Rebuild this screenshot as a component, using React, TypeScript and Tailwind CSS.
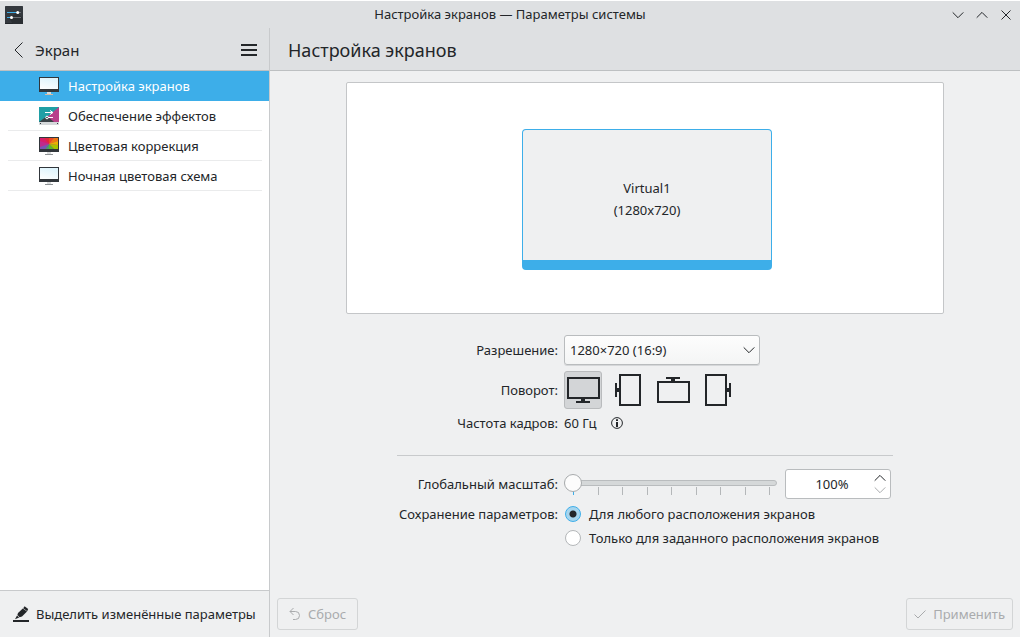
import { useState, type ReactNode } from "react";

type IconProps = { className?: string };

function Chevron({ className = "", up = false }: IconProps & { up?: boolean }) {
  return (
    <svg className={className} width="12" height="12" viewBox="0 0 12 12" fill="none" stroke="currentColor" aria-hidden="true">
      <path d={up ? "M0.7 8.7 6 3.4l5.3 5.3" : "M0.7 3.4 6 8.7l5.3-5.3"} />
    </svg>
  );
}

function AppIcon() {
  return (
    <svg width="18" height="18" viewBox="0 0 18 18" aria-hidden="true">
      <rect width="18" height="18" rx="0.5" fill="#34393e" />
      <path d="M0 17.5h18" stroke="#22262a" />
      <path d="M12 6.5l6 6V18H8l-4-6z" fill="#2a2e32" />
      <path d="M2 6.5h11" stroke="#3daee9" />
      <path d="M14 6.5h2" stroke="#6b7075" />
      <path d="M2 11.5h4" stroke="#3daee9" />
      <path d="M7 11.5h9" stroke="#6b7075" />
      <circle cx="12.7" cy="6.5" r="1.5" fill="#fff" />
      <circle cx="6.5" cy="11.5" r="1.5" fill="#fff" />
    </svg>
  );
}

function Monitor({ stand = "#b3b7ba", children }: { stand?: string; children: ReactNode }) {
  return (
    <svg width="20" height="20" viewBox="0 0 20 20" aria-hidden="true">
      <path d="M8 16h4v2H8z" fill="#d8dadb" />
      <path d="M6 18h8v1H6z" fill={stand} />
      <rect y="1" width="20" height="15" fill="#31363b" />
      {children}
    </svg>
  );
}

function DisplayIcon({ stand }: { stand?: string }) {
  return (
    <Monitor stand={stand}>
      <defs>
        <linearGradient id="sky" x1="0" y1="1" x2="0.4" y2="0">
          <stop offset="0" stopColor="#fff" />
          <stop offset="1" stopColor="#e0f5fd" />
        </linearGradient>
      </defs>
      <rect x="1" y="2" width="18" height="11" fill="url(#sky)" />
    </Monitor>
  );
}

function ColorIcon() {
  return (
    <Monitor stand="#8e9396">
      <rect x="1" y="2" width="18" height="11" fill="#c02a8c" />
      <path d="M10 8 1 5V2h4z" fill="#d81c6c" />
      <path d="M10 8 5 2h5z" fill="#e2263c" />
      <path d="M10 8V2h5z" fill="#ea4a22" />
      <path d="M10 8 15 2h4v3z" fill="#ef7a12" />
      <path d="M10 8l9-3v4z" fill="#e8b400" />
      <path d="M10 8l9 1v4h-4z" fill="#a8c400" />
      <path d="M10 8l5 5h-5z" fill="#5cb82a" />
      <path d="M10 8v5H6z" fill="#4a9a6c" />
      <path d="M10 8 6 13H1v-2z" fill="#7a54b4" />
    </Monitor>
  );
}

function EffectsIcon() {
  return (
    <svg width="20" height="20" viewBox="0 0 20 20" aria-hidden="true">
      <rect y="1" width="20" height="15" fill="#1f9fa5" />
      <path d="M20 1v15h-7L8 11z" fill="#b8408a" />
      <path d="M0 16l8-6 7 6z" fill="#3b4348" />
      <rect y="16" width="20" height="3" fill="#d5d8da" />
      <path d="M1 17.5h1M18 17.5h1" stroke="#31363b" />
      <path d="M6 6.5h8M11 4.5l3 2-3 2M14 11.5H9" stroke="#fff" fill="none" />
      <circle cx="8" cy="11.5" r="1.3" stroke="#fff" fill="none" />
    </svg>
  );
}

type Rotation = "normal" | "left" | "inverted" | "right";

function RotationIcon({ kind }: { kind: Rotation }) {
  return (
    <svg width="36" height="36" viewBox="0 0 36 36" fill="none" stroke="#232629" strokeWidth="2" aria-hidden="true">
      {kind === "normal" && (
        <>
          <path d="M3 6h31v20H3zM11 30h14" />
          <path d="M18 26v4" strokeWidth="4" />
        </>
      )}
      {kind === "left" && (
        <>
          <path d="M10 3h20v30H10zM6 11v14" />
          <path d="M6 18h4" strokeWidth="4" />
        </>
      )}
      {kind === "inverted" && (
        <>
          <path d="M3 10h31v20H3zM11 6h14" />
          <path d="M18 6v4" strokeWidth="4" />
        </>
      )}
      {kind === "right" && (
        <>
          <path d="M6 3h20v30H6zM30 11v14" />
          <path d="M26 18h4" strokeWidth="4" />
        </>
      )}
    </svg>
  );
}

const pages: { title: string; icon: ReactNode }[] = [
  { title: "Настройка экранов", icon: <DisplayIcon stand="#d9b9a0" /> },
  { title: "Обеспечение эффектов", icon: <EffectsIcon /> },
  { title: "Цветовая коррекция", icon: <ColorIcon /> },
  { title: "Ночная цветовая схема", icon: <DisplayIcon stand="#8e9396" /> },
];

const rotations: { kind: Rotation; label: string }[] = [
  { kind: "normal", label: "Без поворота" },
  { kind: "left", label: "90° по часовой стрелке" },
  { kind: "inverted", label: "Вверх ногами" },
  { kind: "right", label: "90° против часовой стрелки" },
];

const ticks = [100, 125, 150, 175, 200, 225, 250, 275, 300];

function TitleBar() {
  return (
    <header className="grid h-7 grid-cols-[1fr_auto_1fr] items-center border-t border-white bg-[#dee0e2] px-[5px]">
      <AppIcon />
      <div className="pb-[2px] text-[13px]">Настройка экранов — Параметры системы</div>
      <div className="flex justify-end gap-3 pr-[3px]">
        <button type="button" aria-label="Свернуть"><Chevron /></button>
        <button type="button" aria-label="Развернуть"><Chevron up /></button>
        <button type="button" aria-label="Закрыть">
          <svg width="12" height="12" viewBox="0 0 12 12" stroke="currentColor" aria-hidden="true">
            <path d="M1.5 1.5l9 9M10.5 1.5l-9 9" />
          </svg>
        </button>
      </div>
    </header>
  );
}

function Sidebar() {
  return (
    <aside className="flex w-[270px] shrink-0 flex-col border-r border-[#c8cacc]">
      <div className="flex h-[43px] items-center justify-between border-b border-[#bdc0c2] bg-[#dee0e2] px-3 pt-[2px]">
        <button type="button" className="flex items-center gap-[9px] text-[15px]">
          <svg width="14" height="16" viewBox="0 0 14 16" fill="none" stroke="currentColor" aria-hidden="true">
            <path d="M10.5 0.5 3 8l7.5 7.5" />
          </svg>
          Экран
        </button>
        <button type="button" aria-label="Меню">
          <svg width="16" height="12" viewBox="0 0 16 12" fill="currentColor" aria-hidden="true">
            <path d="M0 0h16v2H0zM0 5h16v2H0zM0 10h16v2H0z" />
          </svg>
        </button>
      </div>
      <nav className="flex-1 bg-white">
        {pages.map((page, i) => (
          <a
            key={page.title}
            href="#"
            aria-current={i === 0 ? "page" : undefined}
            className={
              i === 0
                ? "flex h-[30px] items-center gap-[9px] bg-[#3daee9] pl-[39px] text-white"
                : "mr-[7px] ml-2 flex h-[30px] items-center gap-[9px] border-b border-[#eaebec] pl-[31px]"
            }
          >
            {page.icon}
            {page.title}
          </a>
        ))}
      </nav>
      <div className="flex h-[47px] items-center border-t border-[#c8cacc] pl-3">
        <button type="button" className="flex items-center gap-[6px] whitespace-nowrap">
          <svg width="18" height="18" viewBox="0 0 18 18" fill="currentColor" aria-hidden="true">
            <path d="M1 15h16v2H1z" />
            <path d="M12.6 1.2 16.2 4 15.2 6.2 11.2 3.2z" />
            <path d="M10.8 3.4 15 6.6 10 11.6 7.6 12.2 5.4 10 6 8z" />
            <path d="M5 10.4 7.2 12.6 3 14.2z" />
          </svg>
          Выделить изменённые параметры
        </button>
      </div>
    </aside>
  );
}

function ScreenPreview() {
  return (
    <div className="mx-[76px] mt-[11px] flex h-[232px] items-center justify-center rounded-[2px] border border-[#c4c6c8] bg-white pt-[2px] pl-[4px]">
      <button
        type="button"
        className="flex h-[141px] w-[250px] items-center justify-center rounded-[4px] border border-b-10 border-[#3daee9] bg-[#eff0f1] pb-2 leading-[22px]"
      >
        <span className="pt-4">
          Virtual1
          <br />
          (1280x720)
        </span>
      </button>
    </div>
  );
}

function SettingsForm() {
  const [rotation, setRotation] = useState<Rotation>("normal");
  const [scale, setScale] = useState(100);
  const [retention, setRetention] = useState("any");
  const radio =
    "size-4 appearance-none rounded-full border border-[#b4b7b9] bg-white checked:border-[#3daee9] checked:bg-[radial-gradient(circle,#232629_3px,#a6d5ee_4px)]";

  return (
    <form className="mx-auto mt-[21px] grid w-[496px] grid-cols-[161px_1fr] items-center gap-x-[6px]">
      <label htmlFor="resolution" className="text-right whitespace-nowrap">Разрешение:</label>
      <div className="relative h-[30px] w-[196px]">
        <select
          id="resolution"
          className="size-full appearance-none rounded-[3px] border border-[#b9bcbe] bg-linear-to-b from-[#fdfdfd] to-[#f4f5f5] pl-[5px] shadow-[0_1px_0_#d5d7d9]"
        >
          <option>1280×720 (16:9)</option>
        </select>
        <Chevron className="pointer-events-none absolute top-[9px] right-[5px]" />
      </div>

      <span id="rotation-label" className="mt-[5px] text-right">Поворот:</span>
      <div role="group" aria-labelledby="rotation-label" className="mt-[6px] flex gap-[7px]">
        {rotations.map(({ kind, label }) => (
          <button
            key={kind}
            type="button"
            aria-label={label}
            aria-pressed={rotation === kind}
            onClick={() => setRotation(kind)}
            className="flex size-[38px] items-center justify-center rounded-[3px] border border-transparent aria-pressed:border-[#b9bbbd] aria-pressed:bg-[#d3d5d7]"
          >
            <RotationIcon kind={kind} />
          </button>
        ))}
      </div>

      <span className="mt-1 text-right">Частота кадров:</span>
      <div className="mt-1 flex items-center gap-[15px]">
        60 Гц
        <button type="button" aria-label="Сведения">
          <svg width="12" height="12" viewBox="0 0 12 12" aria-hidden="true">
            <circle cx="6" cy="6" r="5.4" fill="none" stroke="#232629" />
            <path d="M5 2.3h2v1.6H5zM5 5h2v5H5z" fill="#232629" />
          </svg>
        </button>
      </div>

      <hr className="col-span-2 mt-[22px] mb-[13px] border-[#c8cacc]" />

      <label htmlFor="scale" className="text-right whitespace-nowrap">Глобальный масштаб:</label>
      <div className="flex items-center justify-between">
        <div className="relative w-[213px] pb-[2px]">
          <input
            id="scale"
            type="range"
            min={100}
            max={300}
            step={25}
            value={scale}
            onChange={(e) => setScale(Number(e.target.value))}
            className="relative z-10 block h-5 w-full appearance-none bg-transparent [&::-webkit-slider-runnable-track]:h-[6px] [&::-webkit-slider-runnable-track]:rounded-full [&::-webkit-slider-runnable-track]:border [&::-webkit-slider-runnable-track]:border-[#b9bcbe] [&::-webkit-slider-runnable-track]:bg-[#d5d8d9] [&::-webkit-slider-thumb]:-mt-[7px] [&::-webkit-slider-thumb]:-ml-px [&::-webkit-slider-thumb]:size-[18px] [&::-webkit-slider-thumb]:appearance-none [&::-webkit-slider-thumb]:rounded-full [&::-webkit-slider-thumb]:border [&::-webkit-slider-thumb]:border-[#a8abad] [&::-webkit-slider-thumb]:bg-[#fcfcfc]"
          />
          <div className="absolute right-[7px] bottom-0 left-[9px] flex justify-between" aria-hidden="true">
            {ticks.map((t) => (
              <span key={t} className={t <= scale ? "h-2 w-px bg-[#3daee9]" : "h-2 w-px bg-[#b4b7b9]"} />
            ))}
          </div>
        </div>
        <div className="mr-[2px] flex h-[30px] w-[106px] items-center rounded-[3px] border border-[#b9bcbe] bg-white">
          <input
            type="text"
            aria-label="Масштаб в процентах"
            value={`${scale}%`}
            readOnly
            className="w-full min-w-0 bg-transparent pl-1 text-center outline-none"
          />
          <div className="flex flex-col pr-1">
            <button type="button" aria-label="Увеличить" onClick={() => setScale(Math.min(300, scale + 25))}>
              <Chevron up />
            </button>
            <button
              type="button"
              aria-label="Уменьшить"
              disabled={scale === 100}
              onClick={() => setScale(scale - 25)}
              className="disabled:text-[#a9abad]"
            >
              <Chevron />
            </button>
          </div>
        </div>
      </div>

      <span id="retention-label" className="mt-[3px] text-right whitespace-nowrap">Сохранение параметров:</span>
      <label className="mt-[3px] flex h-6 items-center gap-2 pl-px whitespace-nowrap">
        <input type="radio" name="retention" className={radio} checked={retention === "any"} onChange={() => setRetention("any")} />
        Для любого расположения экранов
      </label>
      <label className="col-start-2 flex h-6 items-center gap-2 pl-px whitespace-nowrap">
        <input type="radio" name="retention" className={radio} checked={retention === "this"} onChange={() => setRetention("this")} />
        Только для заданного расположения экранов
      </label>
    </form>
  );
}

export default function App() {
  return (
    <div className="flex min-h-screen flex-col bg-[#eff0f1] font-['Noto_Sans',sans-serif] text-[13px] leading-5 text-[#232629]">
      <TitleBar />
      <div className="flex flex-1">
        <Sidebar />
        <main className="flex min-w-0 flex-1 flex-col">
          <h1 className="flex h-[43px] items-center border-b border-[#bdc0c2] bg-[#dee0e2] pt-[2px] pl-[18px] text-[18px]">
            Настройка экранов
          </h1>
          <ScreenPreview />
          <SettingsForm />
          <footer className="mt-auto flex justify-between px-[7px] pb-[7px] text-[#a9abad]">
            <button type="button" disabled className="flex h-8 items-center gap-[7px] rounded-[3px] border border-[#d3d5d6] px-[11px]">
              <svg width="12" height="14" viewBox="0 0 12 14" fill="none" stroke="currentColor" aria-hidden="true">
                <path d="M4.5 1 1 4.5 4.5 8M1 4.5h5.5a4 4 0 0 1 0 8H4" />
              </svg>
              Сброс
            </button>
            <button type="button" disabled className="flex h-8 items-center gap-[7px] rounded-[3px] border border-[#d3d5d6] px-[7px]">
              <svg width="12" height="12" viewBox="0 0 12 12" fill="none" stroke="currentColor" aria-hidden="true">
                <path d="M0.5 6.5 4 10l7.5-7.5" />
              </svg>
              Применить
            </button>
          </footer>
        </main>
      </div>
    </div>
  );
}
